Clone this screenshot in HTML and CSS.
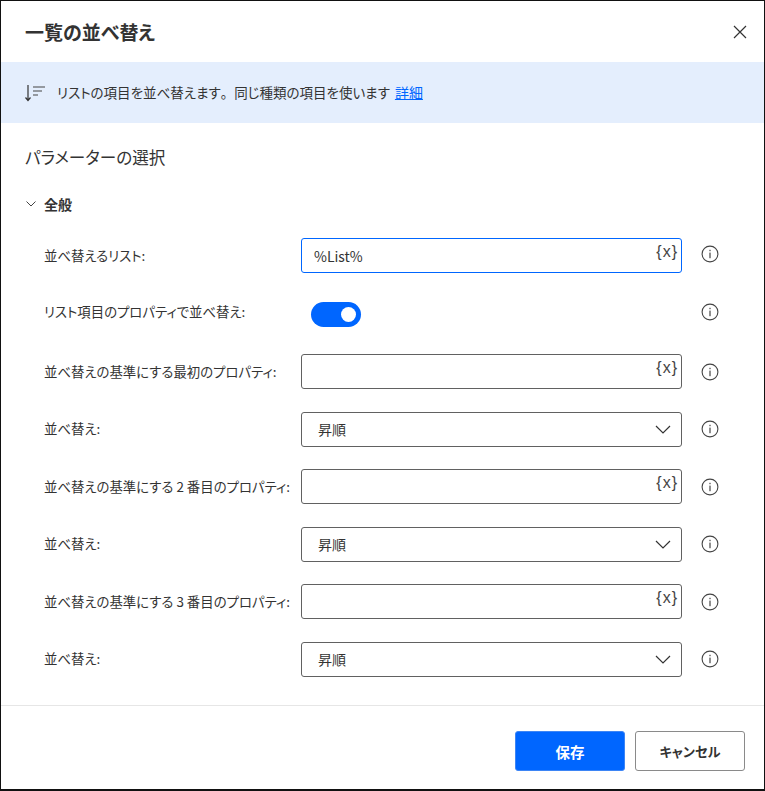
FILE: index.html
```html
<!DOCTYPE html>
<html lang="ja">
<head>
  <meta charset="UTF-8">
  <meta name="viewport" content="width=device-width, initial-scale=1.0">
  <title>一覧の並べ替え</title>
  <link rel="stylesheet" href="styles.css">
</head>
<body>
  <svg class="defs" width="0" height="0">
    <symbol id="info" viewBox="0 0 18 18">
      <circle cx="9" cy="9" r="7.9" fill="none" stroke="#444" stroke-width="1.1"/>
      <rect x="8.4" y="7.6" width="1.2" height="5.6" fill="#444"/>
      <rect x="8.4" y="4.8" width="1.2" height="1.4" fill="#444"/>
    </symbol>
    <symbol id="chevron" viewBox="0 0 16 9">
      <path d="M1 1l7 7 7-7" fill="none" stroke="#333" stroke-width="1.2"/>
    </symbol>
  </svg>

  <div class="dialog">
    <header class="title-bar">
      <h1>一覧の並べ替え</h1>
      <svg class="close" width="14" height="14" viewBox="0 0 14 14">
        <path d="M1 1l12 12M13 1L1 13" fill="none" stroke="#333" stroke-width="1.2"/>
      </svg>
    </header>

    <div class="banner">
      <svg class="banner-icon" width="22" height="22" viewBox="0 0 22 22">
        <path d="M4 3v15M1.5 15.5L4 18.500l2.500-3" fill="none" stroke="#333" stroke-width="1.200"/>
        <path d="M9 5h12M9 9h9M9 13h5" fill="none" stroke="#444" stroke-width="1.200"/>
      </svg>
      <span>リストの項目を並べ替えます<span class="full">。</span>同じ種類の項目を使います</span>
      <a href="#">詳細</a>
    </div>

    <h2>パラメーターの選択</h2>

    <div class="group-head">
      <svg width="10" height="6" viewBox="0 0 10 6">
        <path d="M.5.5L5 5 9.500.5" fill="none" stroke="#444" stroke-width="1"/>
      </svg>
      <span>全般</span>
    </div>

    <div class="form">
      <div class="row">
        <label>並べ替えるリスト:</label>
        <div class="field focused"><span>%List%</span><i class="var">{x}</i></div>
        <svg class="info raised"><use href="#info"/></svg>
      </div>
      <div class="row toggle-row">
        <label>リスト項目のプロパティで並べ替え:</label>
        <div class="toggle-cell"><div class="toggle"></div></div>
        <svg class="info raised"><use href="#info"/></svg>
      </div>
      <div class="row">
        <label>並べ替えの基準にする最初のプロパティ:</label>
        <div class="field"><span></span><i class="var">{x}</i></div>
        <svg class="info"><use href="#info"/></svg>
      </div>
      <div class="row">
        <label>並べ替え:</label>
        <div class="field select"><span>昇順</span><svg class="chevron"><use href="#chevron"/></svg></div>
        <svg class="info"><use href="#info"/></svg>
      </div>
      <div class="row">
        <label>並べ替えの基準にする 2 番目のプロパティ:</label>
        <div class="field"><span></span><i class="var">{x}</i></div>
        <svg class="info"><use href="#info"/></svg>
      </div>
      <div class="row">
        <label>並べ替え:</label>
        <div class="field select"><span>昇順</span><svg class="chevron"><use href="#chevron"/></svg></div>
        <svg class="info"><use href="#info"/></svg>
      </div>
      <div class="row">
        <label>並べ替えの基準にする 3 番目のプロパティ:</label>
        <div class="field"><span></span><i class="var">{x}</i></div>
        <svg class="info"><use href="#info"/></svg>
      </div>
      <div class="row">
        <label>並べ替え:</label>
        <div class="field select"><span>昇順</span><svg class="chevron"><use href="#chevron"/></svg></div>
        <svg class="info"><use href="#info"/></svg>
      </div>
    </div>

    <footer class="actions">
      <button class="btn primary">保存</button>
      <button class="btn">キャンセル</button>
    </footer>
  </div>
</body>
</html>
```

FILE: styles.css
```css
html, body {
  margin: 0;
  height: 100%;
  background: #fff;
}
body {
  font-family: "Noto Sans CJK JP", "Noto Sans", sans-serif;
  font-feature-settings: "palt";
  color: #333;
  overflow: hidden;
}
.defs { position: absolute; }

.dialog {
  box-sizing: border-box;
  width: 765px;
  height: 791px;
  border: 1px solid #111;
  border-bottom-width: 2px;
  background: #fff;
  display: flex;
  flex-direction: column;
}

.title-bar {
  height: 61px;
  flex: none;
  display: flex;
  align-items: center;
  justify-content: space-between;
  padding: 0 17px 0 24px;
}
.title-bar h1 {
  margin: 0;
  font-size: 19px;
  font-weight: 700;
}
.close { display: block; }

.banner {
  height: 61px;
  flex: none;
  display: flex;
  align-items: center;
  background: #e4eefd;
  padding: 0 24px 1px 23px;
  box-sizing: border-box;
  font-size: 13.5px;
}
.banner .full { font-feature-settings: normal; }
.banner-icon { flex: none; margin: 1px 11px 0 0; }
.banner a { color: #0066ff; margin-left: 5px; font-size: 14px; }

h2 {
  margin: 20px 0 0 24px;
  font-size: 16.6px;
  font-weight: 400;
  line-height: 28px;
}

.group-head {
  display: flex;
  align-items: center;
  gap: 8px;
  margin: 22px 0 0 25px;
  height: 22px;
  font-size: 14px;
  font-weight: 700;
}

.form {
  display: flex;
  flex-direction: column;
  gap: 22.5px;
  margin-top: 23px;
  padding-left: 43px;
}
.row {
  display: flex;
  align-items: center;
  height: 35px;
}
.row.toggle-row { height: 36px; }
.row label {
  width: 257px;
  flex: none;
  margin-top: -2px;
  font-size: 13.4px;
  white-space: nowrap;
}
.row.toggle-row label { margin-top: -5px; }
.field {
  box-sizing: border-box;
  width: 381px;
  height: 35px;
  flex: none;
  display: flex;
  align-items: center;
  justify-content: space-between;
  border: 1px solid #616161;
  border-radius: 3px;
  padding: 0 3px 0 12px;
  font-size: 14px;
}
.field.focused { border-color: #0066ff; }
.field.select { padding: 0 10px 0 16px; font-size: 14px; }
.var {
  font-style: normal;
  font-family: "Liberation Sans", sans-serif;
  font-size: 16px;
  letter-spacing: 1px;
  color: #444;
  margin-top: -7px;
}
.chevron { width: 16px; height: 9px; }
.info {
  width: 18px;
  height: 18px;
  flex: none;
  margin: .9px 0 0 19px;
}
.info.raised { margin-top: -3px; }

.toggle-cell { width: 381px; flex: none; padding: 1px 0 0 10px; box-sizing: border-box; }
.toggle {
  position: relative;
  width: 50px;
  height: 25px;
  border-radius: 13px;
  background: #0066ff;
}
.toggle::after {
  content: "";
  position: absolute;
  top: 5px;
  right: 5px;
  width: 15px;
  height: 15px;
  border-radius: 50%;
  background: #fff;
}

.actions {
  margin-top: auto;
  height: 84px;
  flex: none;
  box-sizing: border-box;
  border-top: 1px solid #e6e6e6;
  display: flex;
  justify-content: flex-end;
  gap: 10px;
  padding: 25px 19px 0 0;
}
.btn {
  box-sizing: border-box;
  width: 110px;
  height: 40px;
  border: 1px solid #8a8a8a;
  border-radius: 3px;
  background: #fff;
  color: #333;
  font: 700 13.2px "Noto Sans CJK JP", sans-serif;
  font-feature-settings: "palt";
}
.btn.primary {
  background: #0066ff;
  border-color: #3d85f5;
  color: #fff;
  font-size: 14.5px;
}
```
